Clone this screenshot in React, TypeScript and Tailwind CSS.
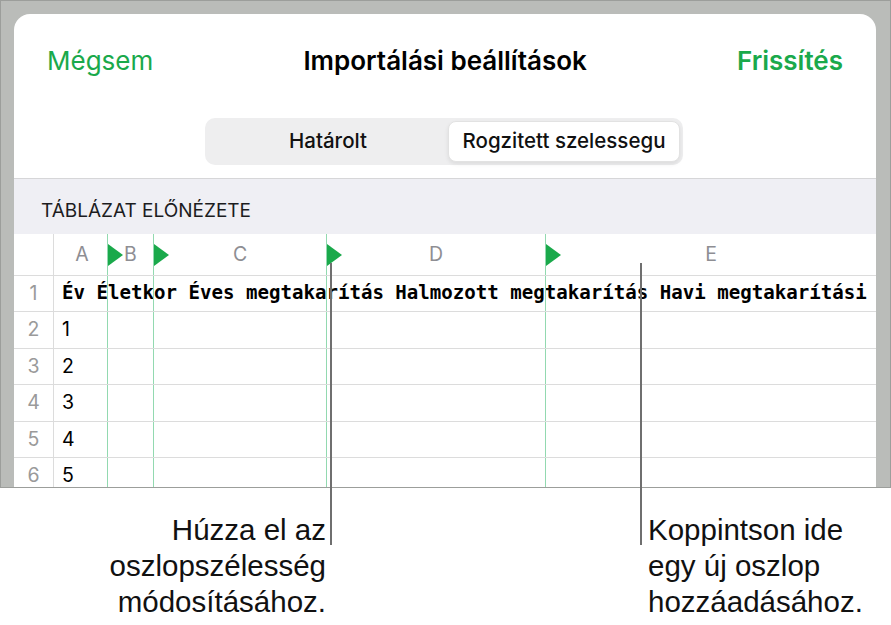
const GREEN = '#1aa94b';

const rows = ['1', '2', '3', '4', '5'];

const Flag = () => (
  <svg width="15" height="22" viewBox="0 0 15 22" className="absolute left-0 top-[10px]">
    <path d="M0 0 L15 11 L0 22 Z" fill={GREEN} />
  </svg>
);

const Cell = ({ w, green, flag, children, className = '' }: { w: string; green?: boolean; flag?: boolean; children?: React.ReactNode; className?: string }) => (
  <div className={`relative h-full shrink-0 ${w} ${green ? 'border-l border-[#92d9b0]' : ''} ${className}`}>
    {flag && <Flag />}
    {children}
  </div>
);

const DataCols = () => (
  <>
    <Cell w="w-[46px]" green />
    <Cell w="w-[173px]" green />
    <Cell w="w-[219px]" green />
    <Cell w="w-[331px]" green />
  </>
);

export default function App() {
  return (
    <div className="relative w-[891px] h-[625px] overflow-hidden bg-white font-['Inter',sans-serif]">
      {/* frame */}
      <div className="h-[488px] bg-[#babcb9] border border-[#9c9e9b] pt-[13px] pl-[13px] pr-[14px]">
        <div className="h-[473px] bg-white rounded-t-[16px] overflow-hidden flex flex-col">
          {/* header */}
          <div className="h-[92px] shrink-0 flex items-center justify-between pl-[33px] pr-[33px] text-[26px]">
            <span className="text-[#1aa94b]">Mégsem</span>
            <span className="font-semibold text-black">Importálási beállítások</span>
            <span className="font-semibold text-[#1aa94b]">Frissítés</span>
          </div>

          {/* segmented */}
          <div className="shrink-0 flex justify-center pt-[12px] pb-[13px] pr-[2px]">
            <div className="w-[478px] h-[47px] bg-[#eeeeef] rounded-[10px] p-[3px] flex">
              <div className="flex-1 flex items-center justify-center text-[20.5px] font-medium text-[#111]">Határolt</div>
              <div className="w-[232px] flex items-center justify-center rounded-[8px] bg-white border border-[#e2e2e2] shadow-[0_2px_4px_rgba(0,0,0,0.08)] text-[20.5px] font-medium text-[#111]">
                Rogzitett szelessegu
              </div>
            </div>
          </div>

          {/* section */}
          <div className="shrink-0 h-[56px] border-t border-[#d6d6d8] bg-[#efeff4] pl-[27px] pt-[20px] text-[19px] leading-[24px] text-[#1c1c1e]">
            TÁBLÁZAT ELŐNÉZETE
          </div>

          {/* column header */}
          <div className="shrink-0 h-[42px] border-b border-[#dcdcdc] flex text-[19.5px] text-[#8e8e93]">
            <Cell w="w-[40px]" className="border-r border-[#dcdcdc]" />
            <Cell w="w-[53px]"><div className="h-full flex items-center justify-center pl-[3px]">A</div></Cell>
            <Cell w="w-[46px]" green flag><div className="h-full flex items-center justify-center">B</div></Cell>
            <Cell w="w-[173px]" green flag><div className="h-full flex items-center justify-center">C</div></Cell>
            <Cell w="w-[219px]" green flag><div className="h-full flex items-center justify-center">D</div></Cell>
            <Cell w="w-[331px]" green flag><div className="h-full flex items-center justify-center">E</div></Cell>
          </div>

          {/* row 1 */}
          <div className="shrink-0 h-[36px] border-b border-[#dcdcdc] flex">
            <Cell w="w-[40px]" className="border-r border-[#dcdcdc] flex items-center justify-center text-[19.5px] text-[#9a9a9a]">1</Cell>
            <Cell w="w-[53px]" className="flex items-center pl-[8px]">
              <span className="whitespace-nowrap font-['DejaVu_Sans_Mono',monospace] font-bold text-[19.1px] text-black">
                Év Életkor Éves megtakarítás Halmozott megtakarítás Havi megtakarítási
              </span>
            </Cell>
            <DataCols />
          </div>

          {rows.map((v, i) => (
            <div key={v} className="shrink-0 h-[36.5px] border-b border-[#dcdcdc] flex">
              <Cell w="w-[40px]" className="border-r border-[#dcdcdc] flex items-center justify-center text-[19.5px] text-[#9a9a9a]">{i + 2}</Cell>
              <Cell w="w-[53px]" className="flex items-center pl-[8px] text-[19.5px] text-black">{v}</Cell>
              <DataCols />
            </div>
          ))}
        </div>
      </div>

      {/* callout lines */}
      <div className="absolute left-[330px] top-[263px] w-[2px] h-[282px] bg-[#6f6f6f]" />
      <div className="absolute left-[640px] top-[263px] w-[2px] h-[282px] bg-[#6f6f6f]" />

      {/* callout texts */}
      <div className="flex pt-[24px] font-['Liberation_Sans',sans-serif] text-[29.5px] leading-[36px] text-[#111]">
        <div className="w-[326px] text-right">
          Húzza el az<br />oszlopszélesség<br />módosításához.
        </div>
        <div className="pl-[322px]">
          Koppintson ide<br />egy új oszlop<br />hozzáadásához.
        </div>
      </div>
    </div>
  );
}
